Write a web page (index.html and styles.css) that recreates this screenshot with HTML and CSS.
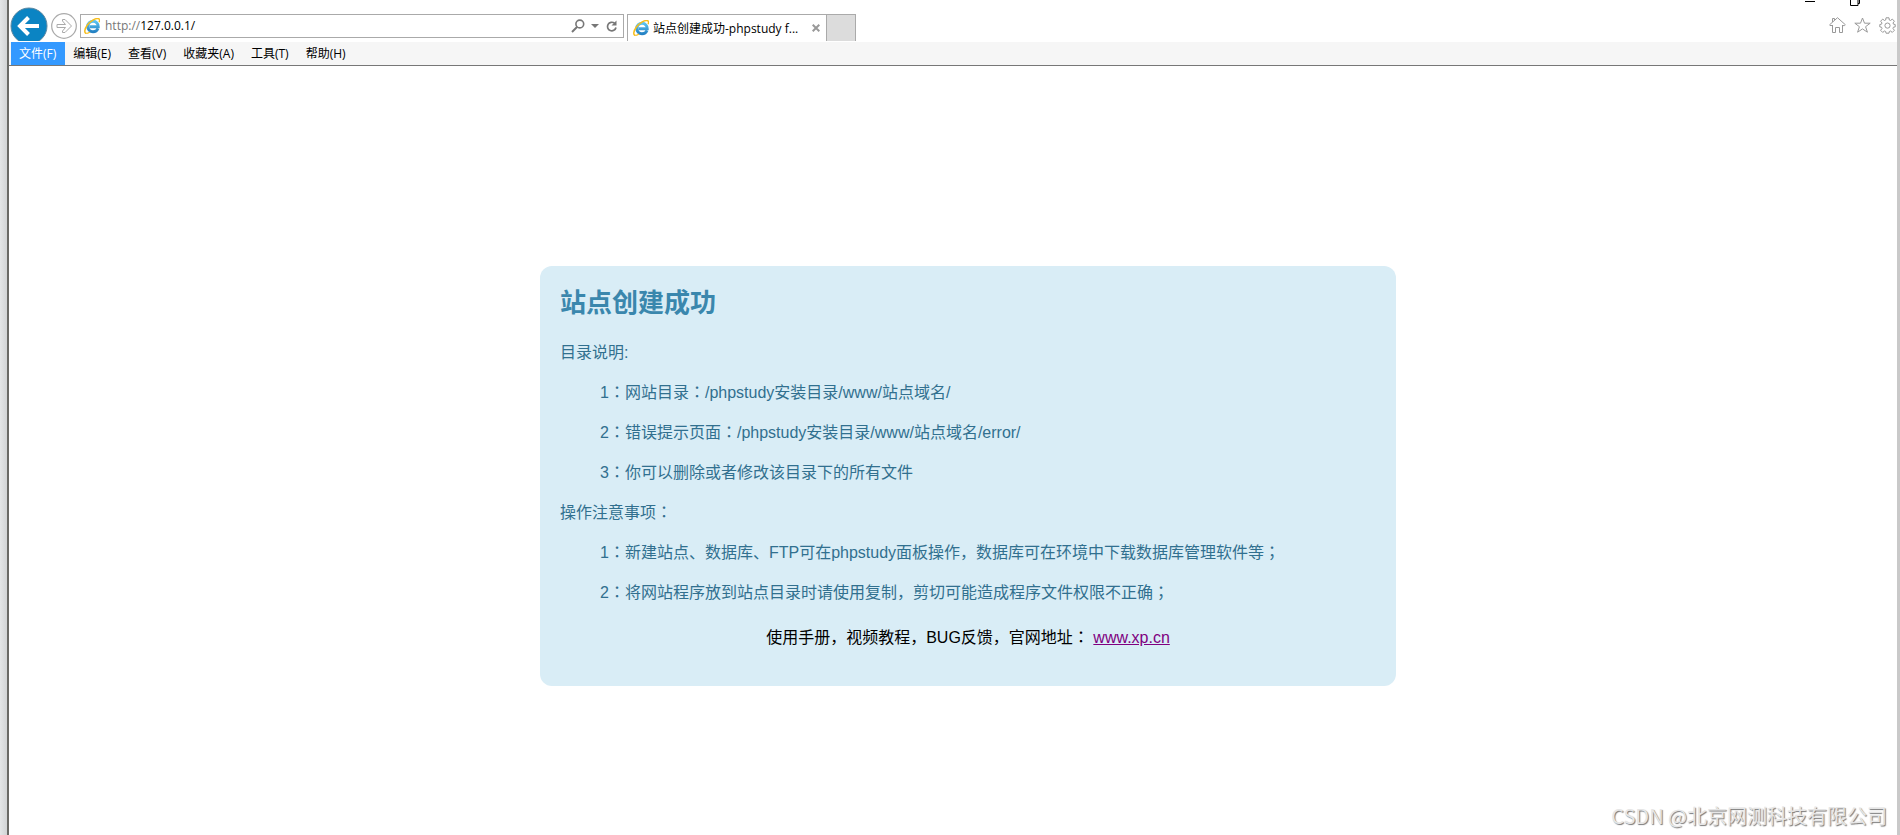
FILE: index.html
```html
<!DOCTYPE html>
<html lang="zh-CN">
<head>
<meta charset="utf-8">
<title>站点创建成功-phpstudy for windows</title>
<link rel="stylesheet" href="styles.css">
</head>
<body>
<svg class="defs" aria-hidden="true">
  <defs>
    <linearGradient id="ie-blue" x1="0" y1="0" x2="0" y2="1">
      <stop offset="0" stop-color="#5cc4f0"/>
      <stop offset="1" stop-color="#2582c4"/>
    </linearGradient>
    <symbol id="ie" viewBox="0 0 16 16">
      <path d="M14 10.500c-.8 2-2.700 3.300-5 3.300A5.300 5.300 0 1 1 14.300 8.800H5.500" fill="none" stroke="url(#ie-blue)" stroke-width="2.900"/>
      <path d="M2.300 15.500C-.2 14.800.6 11 3.200 7.300 6.300 2.900 12.400-.6 14.900.9c.9.600.8 1.900.2 3.200" fill="none" stroke="#f6bd1c" stroke-width="1.500"/>
      <path d="M2.300 15.300c1.100.2 2.400-.4 3.700-1.300" fill="none" stroke="#f6bd1c" stroke-width="1.200"/>
    </symbol>
  </defs>
</svg>
<div class="window">
  <header>
    <div class="toolbar">
      <button class="back" aria-label="后退">
        <svg width="38" height="38" viewBox="0 0 38 38"><circle cx="19" cy="19" r="18" fill="#0b84c3" stroke="#5d87a0"/><path d="M29 19H11M18.500 10.500L10 19l8.500 8.500" fill="none" stroke="#fff" stroke-width="4"/></svg>
      </button>
      <button class="forward" aria-label="前进">
        <svg width="26" height="26" viewBox="0 0 26 26"><circle cx="13" cy="13" r="12.300" fill="#fff" stroke="#aaa" stroke-width="1.200"/><path d="M6 11.500h8.500L11.500 8V6.500h2.500l6.500 6.500-6.500 6.500h-2.500V18l3-3.500H6z" fill="none" stroke="#aaa"/></svg>
      </button>
      <form class="address">
        <svg class="ie" width="16" height="16"><use href="#ie"/></svg>
        <label class="scheme" for="url">http://</label>
        <input id="url" class="url" type="text" value="127.0.0.1/">
        <button type="button" aria-label="搜索"><svg width="14" height="14" viewBox="0 0 14 14"><circle cx="8.800" cy="5" r="3.900" fill="none" stroke="#777" stroke-width="1.600"/><path d="M6 8L1 13" stroke="#777" stroke-width="2"/></svg></button>
        <button type="button" aria-label="下拉"><svg width="8" height="4" viewBox="0 0 8 4"><path d="M0 0h8L4 4z" fill="#777"/></svg></button>
        <button type="button" class="reload" aria-label="刷新"><svg width="12" height="13" viewBox="0 0 12 13"><path d="M8.500 3.200A4.300 4.300 0 1 0 10 7.500" fill="none" stroke="#777" stroke-width="1.700"/><path d="M5.500 5.500h5V.5z" fill="#777"/></svg></button>
      </form>
      <div class="tab">
        <svg class="ie" width="16" height="16"><use href="#ie"/></svg>
        <span class="tab-title">站点创建成功-phpstudy f...</span>
        <button aria-label="关闭标签"><svg width="8" height="8" viewBox="0 0 8 8"><path d="M.7.7l6.600 6.600M7.300.7L.7 7.300" stroke="#999" stroke-width="2"/></svg></button>
      </div>
      <button class="new-tab" aria-label="新建标签"></button>
      <div class="controls">
        <svg class="caption" width="56" height="6" viewBox="0 0 56 6"><path d="M0 1.500h10M45.500 0v5.500h7.500V0M53 3.500h1.500V0" fill="none" stroke="#000"/></svg>
        <div class="tools">
          <button aria-label="主页"><svg width="17" height="16" viewBox="0 0 17 16"><path d="M3.500 8v7.500h3v-5h4v5h3V8M3.500 5V1.500h2V3M1 8.500L.7 7.700 8.500.7l7.800 7-.8.900h-2M1 8.500h2.500" fill="none" stroke="#999"/></svg></button>
          <button aria-label="收藏夹"><svg width="17" height="16" viewBox="0 0 17 16"><path d="M8.500 1l2 5.200h5.700l-4.600 3.500 1.800 5.500-4.900-3.300-4.900 3.300 1.800-5.500L.8 6.200h5.700z" fill="none" stroke="#999"/></svg></button>
          <button aria-label="设置"><svg width="17" height="17" viewBox="0 0 17 17"><path d="M7 .8h3l.3 2.200 1.200.5 1.800-1.400 2.100 2.100L14 6l.5 1.200 1.700.3v2.400l-1.800.3L14 11.500l1.400 1.800-2.100 2.100L11.500 14l-1.200.5-.3 1.700H7l-.3-1.700L5.500 14l-1.800 1.400-2.100-2.100L3 11.500l-.5-1.300L.8 9.900V7.500l1.700-.3L3 6 1.600 4.200l2.100-2.100 1.800 1.400L6.700 3z" fill="none" stroke="#999"/><circle cx="8.500" cy="8.600" r="2.600" fill="none" stroke="#999"/></svg></button>
        </div>
      </div>
    </div>
    <nav class="menu">
      <button class="active">文件(F)</button>
      <button>编辑(E)</button>
      <button>查看(V)</button>
      <button>收藏夹(A)</button>
      <button>工具(T)</button>
      <button>帮助(H)</button>
    </nav>
  </header>
  <main>
    <section class="card">
      <h1>站点创建成功</h1>
      <p>目录说明:</p>
      <p class="item">1<span class="mark" lang="zh-TW">：</span>网站目录<span class="mark" lang="zh-TW">：</span>/phpstudy安装目录/www/站点域名/</p>
      <p class="item">2<span class="mark" lang="zh-TW">：</span>错误提示页面<span class="mark" lang="zh-TW">：</span>/phpstudy安装目录/www/站点域名/error/</p>
      <p class="item">3<span class="mark" lang="zh-TW">：</span>你可以删除或者修改该目录下的所有文件</p>
      <p>操作注意事项<span class="mark" lang="zh-TW">：</span></p>
      <p class="item">1<span class="mark" lang="zh-TW">：</span>新建站点、数据库、FTP可在phpstudy面板操作，数据库可在环境中下载数据库管理软件等<span class="mark" lang="zh-TW">；</span></p>
      <p class="item">2<span class="mark" lang="zh-TW">：</span>将网站程序放到站点目录时请使用复制，剪切可能造成程序文件权限不正确<span class="mark" lang="zh-TW">；</span></p>
      <p class="links">使用手册，视频教程，BUG反馈，官网地址<span class="mark" lang="zh-TW">：</span> <a href="#">www.xp.cn</a></p>
    </section>
  </main>
</div>
<div class="watermark">CSDN @北京网测科技有限公司</div>
</body>
</html>
```

FILE: styles.css
```css
* { box-sizing: border-box; }

body {
  margin: 0;
  min-height: 100vh;
  display: flex;
  padding: 0 3px 0 7px;
  background: linear-gradient(to right, #e4e6e7, #d2d4d5 7px, #c9c9c9 7px);
  font-family: "Liberation Sans", "Noto Sans CJK SC", sans-serif;
}

button {
  display: flex;
  padding: 0;
  border: 0;
  background: none;
  font: inherit;
  color: inherit;
}

svg { display: block; flex: none; }
.defs { position: absolute; width: 0; height: 0; }

.window {
  flex: 1;
  min-width: 0;
  border-left: 2px solid #6a6a66;
  background: #fff;
}

header {
  font: 12px/16px "Open Sans", "Noto Sans CJK SC", sans-serif;
  color: #000;
}

.toolbar {
  display: flex;
  align-items: flex-start;
  height: 42px;
  padding-left: 1px;
  padding-bottom: 1px;
}

.back { height: 41px; padding-top: 7px; overflow: hidden; }
.forward { margin: 13px 3px 0; }

.address {
  display: flex;
  align-items: center;
  width: 544px;
  height: 24px;
  margin-top: 14px;
  padding: 0 5px 0 3px;
  border: 1px solid #aaa;
  gap: 6px;
}

.scheme { margin-left: -1px; color: #777; }

.url {
  flex: 1;
  min-width: 0;
  margin-left: -6px;
  padding: 0;
  border: 0;
  outline: 0;
  background: none;
  font: inherit;
  color: #000;
}

.reload { margin-left: 1px; }

.tab {
  display: flex;
  align-items: center;
  width: 200px;
  height: 27px;
  margin: 14px 0 0 3px;
  padding: 0 6px 0 5px;
  border: 1px solid #aaa;
  border-bottom: 0;
  gap: 4px;
}

.tab-title { flex: 1; padding-top: 2px; white-space: nowrap; }

.new-tab {
  width: 29px;
  height: 27px;
  margin-top: 14px;
  border: 1px solid #aaa;
  border-width: 1px 1px 0 0;
  background: #dcdcdc;
}

.controls {
  display: flex;
  flex-direction: column;
  gap: 11px;
  margin-left: auto;
  padding-right: 1px;
}

.caption { margin-left: -24px; }
.tools { display: flex; gap: 8px; }

.menu {
  display: flex;
  padding-left: 2px;
  border-bottom: 1px solid #777;
  background: #f6f6f6;
}

.menu button { height: 23px; padding: 0 9px 0 8px; align-items: center; }
.menu .active { background: #3399ff; color: #fff; }

main { padding: 200px 0 40px 30px; }

.card {
  width: 856px;
  max-width: 100%;
  margin: 0 auto;
  padding: 21px 20px 36px;
  border-radius: 12px;
  background: #d9edf6;
  color: #31708f;
  font-size: 16px;
  line-height: 24px;
}

h1 {
  margin: 0 0 22px;
  font-size: 26px;
  line-height: 32px;
  color: #3a87ad;
}

p { margin: 0 0 16px; }
.item { padding-left: 40px; }
.mark { font-family: "Noto Sans CJK TC", sans-serif; line-height: 1; }

.links {
  margin: 21px 0 0;
  text-align: center;
  color: #000;
}

.links a { color: #800080; }

.watermark {
  position: absolute;
  right: 13px;
  bottom: 5px;
  font-family: "Noto Sans CJK SC", sans-serif;
  font-size: 20px;
  line-height: 28px;
  color: #e6e6e6;
  text-shadow: 1px 1px 1px #777;
}
```
